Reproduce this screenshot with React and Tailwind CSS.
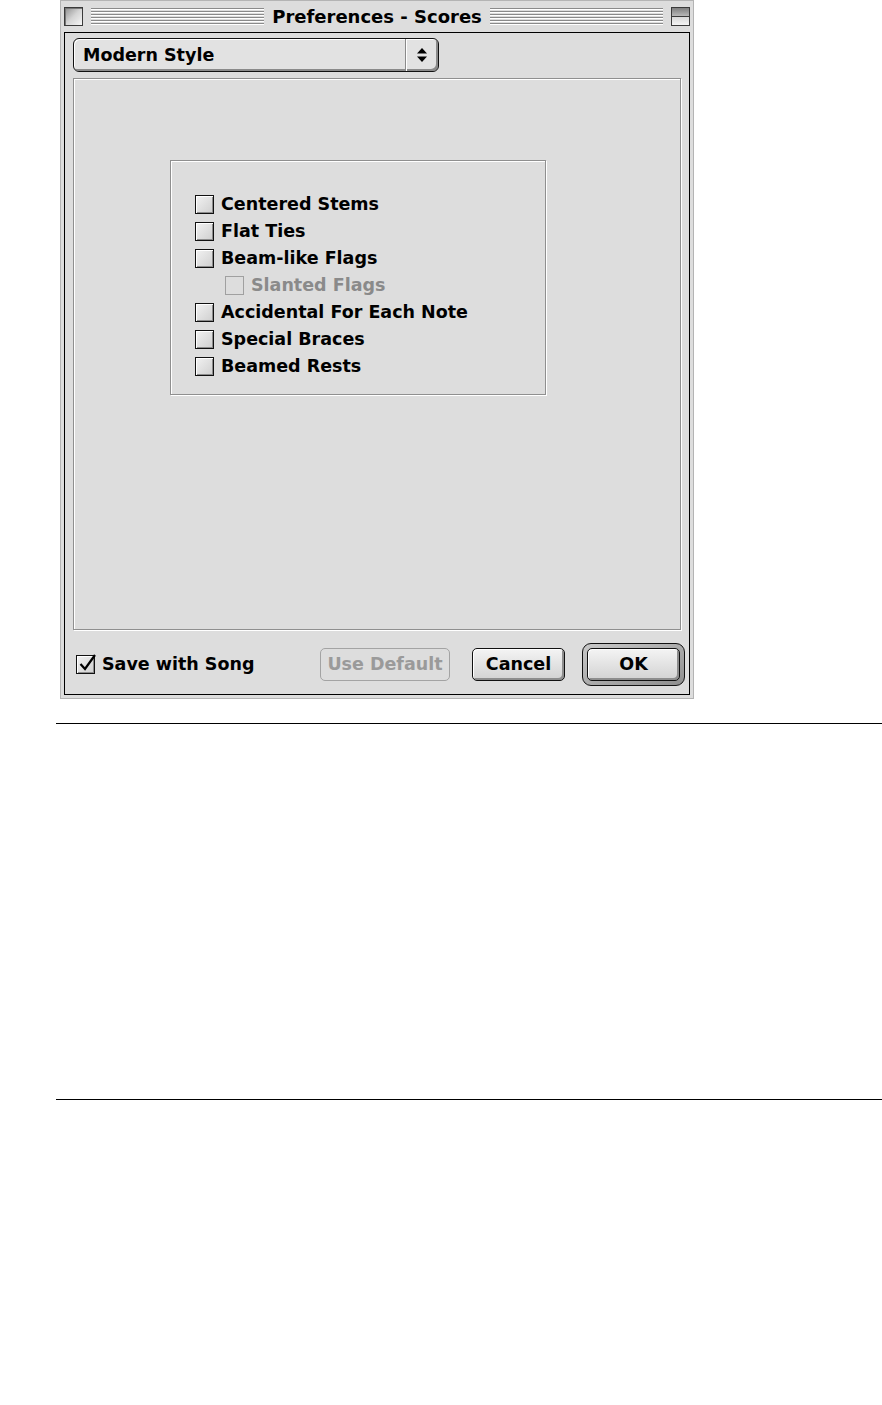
import React from 'react';

const font = { fontFamily: '"DejaVu Sans", Verdana, sans-serif' };

const Stripes = () => (
    <div className="flex-1 flex flex-col gap-[1px] mx-[8px]">
        {[0, 1, 2, 3, 4, 5].map((i) => (
            <div key={i} className="h-[2px] border-t border-[#8a8a8a] bg-white" />
        ))}
    </div>
);

const CheckBox = ({ label, checked, disabled, indent }) => (
    <div className={`flex items-center h-[27px] ${indent ? 'ml-[30px]' : ''}`}>
        <div
            className={`relative w-[19px] h-[19px] border ${disabled
                ? 'border-[#a0a0a0] bg-[#dddddd]'
                : 'border-[#111] bg-gradient-to-br from-[#f2f2f2] to-[#cfcfcf] shadow-[inset_1px_1px_0_#fff,inset_-1px_-1px_0_#8c8c8c]'
                }`}
        >
            {checked && (
                <svg className="absolute -top-[4px] left-[1px]" width="19" height="21" viewBox="0 0 19 21">
                    <path d="M2.5 12 L7 17 L17 3" fill="none" stroke="#000" strokeWidth="2.2" />
                </svg>
            )}
        </div>
        <span className={`ml-[7px] font-bold text-[17.5px] leading-none ${disabled ? 'text-[#8a8a8a]' : 'text-black'}`}>
            {label}
        </span>
    </div>
);

const Button = ({ children, disabled, className = '' }) => (
    <div
        className={`h-[33px] rounded-[5px] border flex items-center justify-center font-bold text-[17.5px] ${disabled
            ? 'border-[#a3a3a3] text-[#9a9a9a] bg-[#dddddd]'
            : 'border-[#111] text-black bg-gradient-to-b from-[#f4f4f4] to-[#d2d2d2] shadow-[inset_1px_1px_0_#fff,inset_-2px_-2px_0_#8d8d8d]'
            } ${className}`}
    >
        {children}
    </div>
);

const App = () => {
    return (
        <div className="w-[882px] h-[1405px] bg-white overflow-hidden" style={font}>
            <div className="ml-[60px] w-[634px] h-[699px] bg-[#dddddd] border border-[#b4b4b4] px-[3px] pb-[3px] flex flex-col">
                {/* title bar */}
                <div className="h-[31px] flex items-center">
                    <div className="w-[19px] h-[19px] border border-[#3a3a3a] bg-gradient-to-br from-[#8f8f8f] via-[#d4d4d4] to-[#f6f6f6] shadow-[inset_1px_1px_0_#777]" />
                    <Stripes />
                    <span className="font-bold text-[18px] leading-none text-black">Preferences - Scores</span>
                    <Stripes />
                    <div className="w-[19px] h-[19px] border border-[#3a3a3a] flex flex-col">
                        <div className="flex-1 bg-gradient-to-b from-[#7f7f7f] to-[#b8b8b8] border-b border-[#3a3a3a]" />
                        <div className="flex-1 bg-gradient-to-b from-[#d8d8d8] to-[#f4f4f4]" />
                    </div>
                </div>

                {/* content */}
                <div className="flex-1 border border-black flex flex-col">
                    {/* popup */}
                    <div className="mt-[5px] ml-[8px] w-[366px] h-[34px] rounded-[6px] border border-[#111] bg-[#e2e2e2] shadow-[inset_1px_1px_0_#fff,inset_-2px_-2px_0_#8a8a8a] flex">
                        <div className="flex-1 flex items-center pl-[9px] font-bold text-[17.5px] text-black">
                            Modern Style
                        </div>
                        <div className="w-[33px] border-l border-[#8a8a8a] shadow-[inset_1px_0_0_#fff] flex items-center justify-center">
                            <svg width="12" height="16" viewBox="0 0 12 16">
                                <path d="M6 1 L11 6.5 L1 6.5 Z" fill="#000" />
                                <path d="M6 15 L11 9.5 L1 9.5 Z" fill="#000" />
                            </svg>
                        </div>
                    </div>

                    {/* panel */}
                    <div className="mt-[6px] ml-[8px] w-[608px] h-[552px] border border-[#8f8f8f] shadow-[1px_1px_0_#fff,inset_1px_1px_0_#fff]">
                        <div className="mt-[81px] ml-[96px] w-[376px] h-[235px] border border-[#8f8f8f] shadow-[1px_1px_0_#fff,inset_1px_1px_0_#fff] pt-[30px] pl-[24px]">
                            <CheckBox label="Centered Stems" />
                            <CheckBox label="Flat Ties" />
                            <CheckBox label="Beam-like Flags" />
                            <CheckBox label="Slanted Flags" disabled indent />
                            <CheckBox label="Accidental For Each Note" />
                            <CheckBox label="Special Braces" />
                            <CheckBox label="Beamed Rests" />
                        </div>
                    </div>

                    {/* bottom row */}
                    <div className="flex-1 flex items-center pt-[5px] pl-[11px] pr-[4px]">
                        <CheckBox label="Save with Song" checked />
                        <Button disabled className="ml-auto w-[130px]">Use Default</Button>
                        <Button className="ml-[22px] w-[93px]">Cancel</Button>
                        <div className="ml-[17px] w-[103px] h-[43px] rounded-[9px] border border-[#111] bg-gradient-to-br from-[#c9c9c9] to-[#8e8e8e] p-[4px]">
                            <Button className="w-full h-full">OK</Button>
                        </div>
                    </div>
                </div>
            </div>

            <div className="mt-[24px] ml-[56px] h-px bg-black" />
            <div className="mt-[375px] ml-[56px] h-px bg-black" />
        </div>
    );
};

export default App;
